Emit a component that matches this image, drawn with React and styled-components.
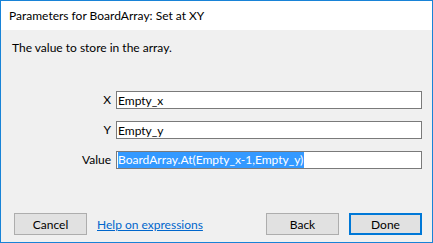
import React from "react";
import styled, { createGlobalStyle } from "styled-components";

const GlobalStyle = createGlobalStyle`
  html, body {
    margin: 0;
    padding: 0;
    background: #ffffff;
  }
  body {
    font-family: "Segoe UI", Lato, "Liberation Sans", Arial, sans-serif;
    font-size: 12px;
    color: #000000;
  }
`;

const Window = styled.div`
  width: 433px;
  height: 243px;
  box-sizing: border-box;
  border: 1px solid #1883d7;
  display: flex;
  flex-direction: column;
  background: #f0f0f0;
`;

const TitleBar = styled.div`
  height: 29px;
  flex: none;
  background: #ffffff;
  display: flex;
  align-items: center;
  padding-left: 8px;
  font-size: 12px;
  color: #000000;
`;

const Body = styled.div`
  flex: 1;
  display: flex;
  flex-direction: column;
  padding: 10px 10px 7px 11px;
`;

const Description = styled.div`
  line-height: 15px;
`;

const Form = styled.div`
  display: grid;
  grid-template-columns: 99px 306px;
  column-gap: 5px;
  row-gap: 12px;
  margin-top: 36px;
  align-items: center;
`;

const Label = styled.label`
  text-align: right;
  line-height: 18px;
`;

const Field = styled.div`
  height: 18px;
  box-sizing: border-box;
  border: 1px solid #7a7a7a;
  background: #ffffff;
  display: flex;
  align-items: center;
  padding-left: 1px;
  line-height: 15px;
  white-space: nowrap;
  overflow: hidden;
`;

const Selected = styled.span`
  background: #3399ff;
  color: #ffffff;
  padding-right: 1px;
  line-height: 16px;
`;

const Footer = styled.div`
  margin-top: auto;
  display: flex;
  align-items: center;
`;

const Button = styled.button`
  width: 73px;
  height: 22px;
  box-sizing: border-box;
  border: ${(p) => (p.$default ? "2px solid #0078d7" : "1px solid #adadad")};
  background: #e1e1e1;
  font-family: inherit;
  font-size: 12px;
  color: #000000;
  padding: 0;
  margin-left: ${(p) => p.$gap || 0}px;
`;

const HelpLink = styled.a`
  margin-left: 10px;
  color: #0066cc;
  text-decoration: underline;
  font-size: 12px;
`;

const Spacer = styled.div`
  flex: 1;
`;

export default function App() {
  return (
    <>
      <GlobalStyle />
      <Window>
        <TitleBar>Parameters for BoardArray: Set at XY</TitleBar>
        <Body>
          <Description>The value to store in the array.</Description>
          <Form>
            <Label>X</Label>
            <Field>Empty_x</Field>
            <Label>Y</Label>
            <Field>Empty_y</Field>
            <Label>Value</Label>
            <Field>
              <Selected>BoardArray.At(Empty_x-1,Empty_y)</Selected>
            </Field>
          </Form>
          <Footer>
            <Button $gap={2}>Cancel</Button>
            <HelpLink href="#">Help on expressions</HelpLink>
            <Spacer />
            <Button>Back</Button>
            <Button $default $gap={10}>Done</Button>
          </Footer>
        </Body>
      </Window>
    </>
  );
}
